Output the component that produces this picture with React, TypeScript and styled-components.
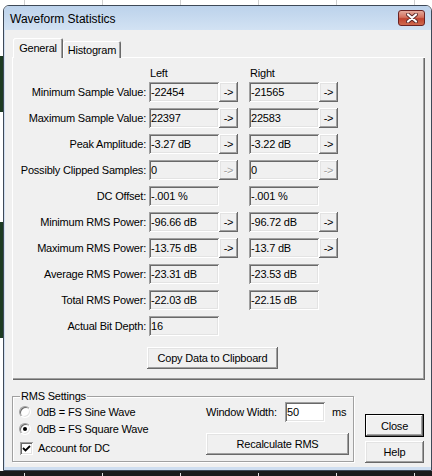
import React from "react";
import styled, { createGlobalStyle } from "styled-components";

const GlobalStyle = createGlobalStyle`
	html, body {
		margin: 0;
		padding: 0;
		background: #ffffff;
	}
	body {
		font-family: "Liberation Sans", Arial, sans-serif;
		font-size: 11px;
		letter-spacing: -0.2px;
		color: #000000;
	}
	* {
		box-sizing: border-box;
	}
`;

const raised = `
	background: #f0f0f0;
	box-shadow: inset -1px -1px #696969, inset 1px 1px #ffffff, inset -2px -2px #a0a0a0, inset 2px 2px #e3e3e3;
`;

const sunken = `
	box-shadow: inset 1px 1px #a0a0a0, inset -1px -1px #ffffff, inset 2px 2px #696969, inset -2px -2px #e3e3e3;
`;

const Desktop = styled.div`
	width: 432px;
	height: 476px;
	overflow: hidden;
	display: flex;
	flex-direction: column;
	padding: 5px 0 0 3px;
	background-color: #ffffff;
	background-image: linear-gradient(
			to bottom,
			transparent 0 56px,
			#1d3b22 56px 112px,
			transparent 112px 222px,
			#1d3b22 222px 338px,
			transparent 338px
		),
		linear-gradient(to right, #cfcfcf 0 1px, transparent 1px);
	background-size: 3px 100%, 78px 100%;
	background-position: 0 0, 24px 0;
	background-repeat: no-repeat, repeat-x;
`;

const BottomStrip = styled.div`
	margin-left: -3px;
	width: 432px;
	height: 5px;
	background-color: #1b1b1b;
	background-image: linear-gradient(to right, #e0e0e0 0 1px, transparent 1px);
	background-size: 78px 3px;
	background-position: 24px 2px;
	background-repeat: repeat-x;
`;

const Window = styled.div`
	width: 429px;
	height: 466px;
	border: 1px solid #3e4957;
	border-radius: 6px 6px 0 0;
	overflow: hidden;
	display: flex;
	flex-direction: column;
`;

const TitleBar = styled.div`
	height: 24px;
	flex: none;
	display: flex;
	align-items: center;
	justify-content: space-between;
	padding: 2px 6px 0 6px;
	background: linear-gradient(to bottom, #bcd2eb, #d2e2f3);
	font-size: 12px;
	letter-spacing: 0;
	color: #000000;
`;

const CloseBox = styled.div`
	align-self: flex-start;
	margin-top: 2px;
	width: 27px;
	height: 16px;
	border: 1px solid #6b2222;
	border-radius: 3px;
	background: linear-gradient(to bottom, #e5a99b 0%, #d4715e 45%, #c0432f 55%, #cf6a4f 100%);
	display: flex;
	align-items: center;
	justify-content: center;
`;

const Client = styled.div`
	flex: 1;
	display: flex;
	flex-direction: column;
	background: #f0f0f0;
	border-left: 1px solid #cfdef0;
	border-bottom: 3px solid #cfdef0;
	padding: 8px 6px 0 7px;
`;

const TabStrip = styled.div`
	height: 20px;
	display: flex;
	align-items: flex-end;
	padding-left: 1px;
	position: relative;
	z-index: 1;
`;

const Tab = styled.div<{ $active?: boolean }>`
	width: ${p => (p.$active ? 50 : 58)}px;
	height: ${p => (p.$active ? 20 : 17)}px;
	background: #f0f0f0;
	border-radius: 2px 2px 0 0;
	box-shadow: inset 1px 1px #ffffff, inset -1px 0 #696969, inset -2px 0 #a0a0a0;
	display: flex;
	align-items: center;
	justify-content: center;
	padding-top: ${p => (p.$active ? 0 : 1)}px;
`;

const Panel = styled.div`
	margin-top: -1px;
	height: 323px;
	flex: none;
	padding-top: 9px;
	box-shadow: inset 1px 1px #ffffff, inset -1px -1px #696969, inset -2px -2px #a0a0a0;
	display: flex;
	flex-direction: column;
`;

const Grid = styled.div`
	display: grid;
	grid-template-columns: 137px 70px 19px 11px 70px 19px;
	align-items: center;
`;

const HeaderRow = styled(Grid)`
	height: 14px;
	margin-bottom: 2px;
`;

const ColumnTitle = styled.div<{ $col: number }>`
	grid-column: ${p => p.$col};
	padding-left: 1px;
`;

const Rows = styled.div`
	display: flex;
	flex-direction: column;
	gap: 6px;
`;

const StatRow = styled(Grid)`
	height: 20px;
`;

const Label = styled.div`
	text-align: right;
	padding-right: 3px;
	white-space: nowrap;
`;

const Field = styled.div<{ $white?: boolean }>`
	height: 20px;
	line-height: 20px;
	padding-left: 2px;
	white-space: nowrap;
	overflow: hidden;
	background: ${p => (p.$white ? "#ffffff" : "#f0f0f0")};
	${sunken}
`;

const ArrowButton = styled.div<{ $disabled?: boolean }>`
	height: 20px;
	display: flex;
	align-items: center;
	justify-content: center;
	color: ${p => (p.$disabled ? "#a0a0a0" : "#000000")};
	text-shadow: ${p => (p.$disabled ? "1px 1px #ffffff" : "none")};
	${raised}
`;

const CopyRow = styled.div`
	margin-top: 11px;
	padding-left: 135px;
`;

const PushButton = styled.div<{ $w: number; $default?: boolean }>`
	width: ${p => p.$w}px;
	height: ${p => (p.$default ? 23 : 22)}px;
	display: flex;
	align-items: center;
	justify-content: center;
	white-space: nowrap;
	${raised}
	${p =>
		p.$default
			? `box-shadow: inset 1px 1px #000000, inset -1px -1px #000000, inset -2px -2px #696969, inset 2px 2px #ffffff, inset -3px -3px #a0a0a0;`
			: ""}
`;

const BottomArea = styled.div`
	height: 87px;
	flex: none;
	display: flex;
	align-items: flex-start;
`;

const GroupBox = styled.fieldset`
	margin: 9px 0 0 0;
	padding: 0 4px 0 6px;
	width: 342px;
	min-width: 0;
	height: 73px;
	border: 1px solid #a0a0a0;
	box-shadow: inset 1px 1px #ffffff, 1px 1px #ffffff;
	display: flex;
`;

const Legend = styled.legend`
	margin-left: 1px;
	padding: 0 1px;
	line-height: 14px;
	background: #f0f0f0;
`;

const OptionColumn = styled.div`
	display: flex;
	flex-direction: column;
`;

const OptionRow = styled.div<{ $gap?: number }>`
	height: 17px;
	display: flex;
	align-items: center;
	gap: ${p => p.$gap ?? 6}px;
`;

const CheckRow = styled(OptionRow)`
	margin-top: 3px;
	height: 16px;
	padding-left: 1px;
`;

const RadioCircle = styled.span<{ $checked?: boolean }>`
	width: 12px;
	height: 12px;
	border-radius: 50%;
	background: #ffffff;
	border: 1px solid;
	border-color: #a0a0a0 #ffffff #ffffff #a0a0a0;
	box-shadow: inset 1px 1px #696969, inset -1px -1px #e3e3e3;
	display: flex;
	align-items: center;
	justify-content: center;

	&::after {
		content: "";
		width: 4px;
		height: 4px;
		border-radius: 50%;
		background: ${p => (p.$checked ? "#000000" : "transparent")};
	}
`;

const CheckBox = styled.span`
	width: 13px;
	height: 13px;
	background: #ffffff;
	display: flex;
	align-items: center;
	justify-content: center;
	${sunken}
`;

const SettingsColumn = styled.div`
	margin-left: auto;
	margin-top: -1px;
	width: 143px;
	display: flex;
	flex-direction: column;
`;

const WidthRow = styled.div`
	height: 20px;
	display: flex;
	align-items: center;
	margin-bottom: 11px;
`;

const WidthLabel = styled.span`
	width: 79px;
	white-space: nowrap;
`;

const WidthInput = styled(Field)`
	width: 40px;
`;

const Unit = styled.span`
	margin-left: 7px;
`;

const ButtonColumn = styled.div`
	margin: 34px 0 0 11px;
	display: flex;
	flex-direction: column;
	gap: 4px;
`;

type Arrow = "on" | "off" | "none";

const stats: { label: string; left: string; right?: string; arrow: Arrow }[] = [
	{ label: "Minimum Sample Value:", left: "-22454", right: "-21565", arrow: "on" },
	{ label: "Maximum Sample Value:", left: "22397", right: "22583", arrow: "on" },
	{ label: "Peak Amplitude:", left: "-3.27 dB", right: "-3.22 dB", arrow: "on" },
	{ label: "Possibly Clipped Samples:", left: "0", right: "0", arrow: "off" },
	{ label: "DC Offset:", left: "-.001 %", right: "-.001 %", arrow: "none" },
	{ label: "Minimum RMS Power:", left: "-96.66 dB", right: "-96.72 dB", arrow: "on" },
	{ label: "Maximum RMS Power:", left: "-13.75 dB", right: "-13.7 dB", arrow: "on" },
	{ label: "Average RMS Power:", left: "-23.31 dB", right: "-23.53 dB", arrow: "none" },
	{ label: "Total RMS Power:", left: "-22.03 dB", right: "-22.15 dB", arrow: "none" },
	{ label: "Actual Bit Depth:", left: "16", arrow: "none" },
];

const Jump: React.FC<{ arrow: Arrow }> = ({ arrow }) =>
	arrow === "none" ? <span /> : <ArrowButton $disabled={arrow === "off"}>-&gt;</ArrowButton>;

export default function App() {
	return (
		<>
			<GlobalStyle />
			<Desktop>
				<Window>
					<TitleBar>
						<span>Waveform Statistics</span>
						<CloseBox>
							<svg width="12" height="10" viewBox="0 0 12 10">
								<path d="M2 1.5 L10 8.5 M10 1.5 L2 8.5" stroke="#5b2a2a" strokeWidth="4" strokeLinecap="round" />
								<path d="M2 1.5 L10 8.5 M10 1.5 L2 8.5" stroke="#ffffff" strokeWidth="2.2" strokeLinecap="round" />
							</svg>
						</CloseBox>
					</TitleBar>
					<Client>
						<TabStrip>
							<Tab $active>General</Tab>
							<Tab>Histogram</Tab>
						</TabStrip>
						<Panel>
							<HeaderRow>
								<ColumnTitle $col={2}>Left</ColumnTitle>
								<ColumnTitle $col={5}>Right</ColumnTitle>
							</HeaderRow>
							<Rows>
								{stats.map(s => (
									<StatRow key={s.label}>
										<Label>{s.label}</Label>
										<Field>{s.left}</Field>
										<Jump arrow={s.arrow} />
										<span />
										{s.right !== undefined ? <Field>{s.right}</Field> : <span />}
										<Jump arrow={s.arrow} />
									</StatRow>
								))}
							</Rows>
							<CopyRow>
								<PushButton $w={131}>Copy Data to Clipboard</PushButton>
							</CopyRow>
						</Panel>
						<BottomArea>
							<GroupBox>
								<Legend>RMS Settings</Legend>
								<OptionColumn>
									<OptionRow>
										<RadioCircle />
										<span>0dB = FS Sine Wave</span>
									</OptionRow>
									<OptionRow>
										<RadioCircle $checked />
										<span>0dB = FS Square Wave</span>
									</OptionRow>
									<CheckRow $gap={5}>
										<CheckBox>
											<svg width="9" height="9" viewBox="0 0 9 9">
												<path d="M1 4 L3.5 6.5 L8 2" stroke="#000000" strokeWidth="1.8" fill="none" />
											</svg>
										</CheckBox>
										<span>Account for DC</span>
									</CheckRow>
								</OptionColumn>
								<SettingsColumn>
									<WidthRow>
										<WidthLabel>Window Width:</WidthLabel>
										<WidthInput $white>50</WidthInput>
										<Unit>ms</Unit>
									</WidthRow>
									<PushButton $w={143}>Recalculate RMS</PushButton>
								</SettingsColumn>
							</GroupBox>
							<ButtonColumn>
								<PushButton $w={59} $default>
									Close
								</PushButton>
								<PushButton $w={59}>Help</PushButton>
							</ButtonColumn>
						</BottomArea>
					</Client>
				</Window>
				<BottomStrip />
			</Desktop>
		</>
	);
}
